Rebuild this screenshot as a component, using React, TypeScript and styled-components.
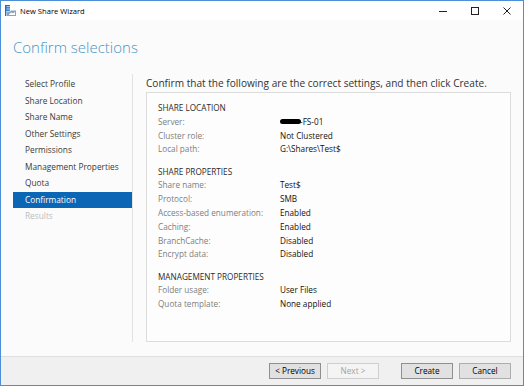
import styled, { createGlobalStyle } from 'styled-components'

const GlobalStyle = createGlobalStyle`
  html, body {
    margin: 0;
    padding: 0;
    background: #ffffff;
  }
  body {
    font-family: "Open Sans", "Noto Sans", sans-serif;
  }
`

const Window = styled.div`
  width: 524px;
  height: 386px;
  box-sizing: border-box;
  border: 1px solid #4a8fd8;
  background: #fbfbfb;
  display: flex;
  flex-direction: column;
  overflow: hidden;
`

const TitleBar = styled.div`
  height: 19px;
  flex: none;
  background: #ffffff;
  display: flex;
  align-items: center;
  padding-left: 4px;
`

const AppTitle = styled.span`
  margin-left: 4px;
  font-size: 7.6px;
  color: #000;
  flex: 1;
`

const Controls = styled.div`
  display: flex;
  height: 100%;
`

const ControlButton = styled.div`
  width: 32px;
  height: 100%;
  display: flex;
  align-items: center;
  justify-content: center;
  svg {
    display: block;
  }
`

const Header = styled.div`
  height: 54px;
  flex: none;
  box-sizing: border-box;
  padding: 17px 0 0 12px;
`

const PageTitle = styled.h1`
  margin: 0;
  font-size: 15px;
  font-weight: 300;
  line-height: 20px;
  color: #4696c6;
`

const Main = styled.div`
  flex: 1;
  display: flex;
  margin-bottom: 14px;
  min-height: 0;
`

const Nav = styled.ul`
  list-style: none;
  margin: 0 0 0 12px;
  padding: 2px 0 0;
  width: 119px;
  border-right: 1px solid #e2e2e2;
`

const NavItem = styled.li<{ $active?: boolean; $disabled?: boolean }>`
  height: 16.5px;
  line-height: 16.5px;
  padding-left: 12px;
  font-size: 8.3px;
  white-space: nowrap;
  color: ${p => (p.$active ? '#ffffff' : p.$disabled ? '#bdbdbd' : '#3a3a3a')};
  background: ${p => (p.$active ? '#0c66b6' : 'transparent')};
`

const Content = styled.div`
  flex: 1;
  margin: 0 12px 0 13px;
  display: flex;
  flex-direction: column;
  padding-top: 2px;
`

const Intro = styled.p`
  margin: 0 0 2px;
  font-size: 10.1px;
  line-height: 14px;
  color: #333;
  white-space: nowrap;
`

const SummaryBox = styled.div`
  flex: 1;
  border: 1px solid #dcdcdc;
  background: #fdfdfd;
  padding: 8px 11px;
`

const Section = styled.div`
  & + & {
    margin-top: 8.4px;
  }
`

const SectionTitle = styled.div`
  font-size: 8.2px;
  line-height: 13.8px;
  color: #2b2b2b;
`

const Row = styled.div`
  display: flex;
  font-size: 8.2px;
  line-height: 13.8px;
`

const Label = styled.span`
  width: 122px;
  flex: none;
  color: #7d7d7d;
`

const Value = styled.span`
  color: #111;
  display: flex;
  align-items: center;
`

const Redacted = styled.span`
  display: inline-block;
  width: 21px;
  height: 5px;
  background: #000;
  border-radius: 3px;
  margin-right: -1px;
`

const Footer = styled.div`
  flex: none;
  height: 29px;
  box-sizing: border-box;
  border-top: 1px solid #dfdfdf;
  background: #f0f0f0;
  display: flex;
  justify-content: flex-end;
  align-items: flex-start;
  padding: 6px 12px 0 0;
`

const ButtonGroup = styled.div`
  display: flex;
  gap: 6px;
  & + & {
    margin-left: 22px;
  }
`

const Button = styled.button<{ $default?: boolean }>`
  width: 52px;
  height: 16px;
  padding: 0;
  font-family: inherit;
  font-size: 8.2px;
  line-height: 14px;
  color: ${p => (p.disabled ? '#a3a3a3' : '#000')};
  background: ${p => (p.disabled ? '#f4f4f4' : '#e1e1e1')};
  border: 1px solid ${p => (p.disabled ? '#cfcfcf' : p.$default ? '#8f8f8f' : '#adadad')};
  border-radius: 0;
`

const ShareIcon = () => (
  <svg width="11" height="11" viewBox="0 0 11 11">
    <rect x="0" y="0" width="5" height="1.4" fill="#1c6fc4" />
    <rect x="0" y="2.2" width="5" height="1.4" fill="#1c6fc4" />
    <rect x="0" y="4.4" width="5" height="1.4" fill="#1c6fc4" />
    <rect x="0" y="0" width="1.4" height="11" fill="#1c6fc4" />
    <path d="M2 6.5 L5 6.5 L6 5.5 L11 5.5 L11 11 L2 11 Z" fill="#8aa4c0" />
    <path d="M4 9.5 L6 7.5 L8 8.2 L10 7 L10 10 L4 10 Z" fill="#ffffff" />
  </svg>
)

type Field = [string, string]

const sections: { title: string; rows: Field[] }[] = [
  {
    title: 'SHARE LOCATION',
    rows: [
      ['Server:', '-FS-01'],
      ['Cluster role:', 'Not Clustered'],
      ['Local path:', 'G:\\Shares\\Test$'],
    ],
  },
  {
    title: 'SHARE PROPERTIES',
    rows: [
      ['Share name:', 'Test$'],
      ['Protocol:', 'SMB'],
      ['Access-based enumeration:', 'Enabled'],
      ['Caching:', 'Enabled'],
      ['BranchCache:', 'Disabled'],
      ['Encrypt data:', 'Disabled'],
    ],
  },
  {
    title: 'MANAGEMENT PROPERTIES',
    rows: [
      ['Folder usage:', 'User Files'],
      ['Quota template:', 'None applied'],
    ],
  },
]

const steps = [
  'Select Profile',
  'Share Location',
  'Share Name',
  'Other Settings',
  'Permissions',
  'Management Properties',
  'Quota',
  'Confirmation',
  'Results',
]

export default function App() {
  return (
    <>
      <GlobalStyle />
      <Window>
        <TitleBar>
          <ShareIcon />
          <AppTitle>New Share Wizard</AppTitle>
          <Controls>
            <ControlButton>
              <svg width="8" height="8" viewBox="0 0 8 8">
                <line x1="0" y1="4.5" x2="8" y2="4.5" stroke="#222" strokeWidth="1" />
              </svg>
            </ControlButton>
            <ControlButton>
              <svg width="8" height="8" viewBox="0 0 8 8">
                <rect x="0.5" y="0.5" width="7" height="7" fill="none" stroke="#222" strokeWidth="1" />
              </svg>
            </ControlButton>
            <ControlButton>
              <svg width="8" height="8" viewBox="0 0 8 8">
                <path d="M0.5 0.5 L7.5 7.5 M7.5 0.5 L0.5 7.5" stroke="#222" strokeWidth="1" />
              </svg>
            </ControlButton>
          </Controls>
        </TitleBar>
        <Header>
          <PageTitle>Confirm selections</PageTitle>
        </Header>
        <Main>
          <Nav>
            {steps.map(s => (
              <NavItem key={s} $active={s === 'Confirmation'} $disabled={s === 'Results'}>
                {s}
              </NavItem>
            ))}
          </Nav>
          <Content>
            <Intro>Confirm that the following are the correct settings, and then click Create.</Intro>
            <SummaryBox>
              {sections.map(sec => (
                <Section key={sec.title}>
                  <SectionTitle>{sec.title}</SectionTitle>
                  {sec.rows.map(([label, value]) => (
                    <Row key={label}>
                      <Label>{label}</Label>
                      <Value>
                        {label === 'Server:' && <Redacted />}
                        {value}
                      </Value>
                    </Row>
                  ))}
                </Section>
              ))}
            </SummaryBox>
          </Content>
        </Main>
        <Footer>
          <ButtonGroup>
            <Button $default>&lt; Previous</Button>
            <Button disabled>Next &gt;</Button>
          </ButtonGroup>
          <ButtonGroup>
            <Button $default>Create</Button>
            <Button>Cancel</Button>
          </ButtonGroup>
        </Footer>
      </Window>
    </>
  )
}
